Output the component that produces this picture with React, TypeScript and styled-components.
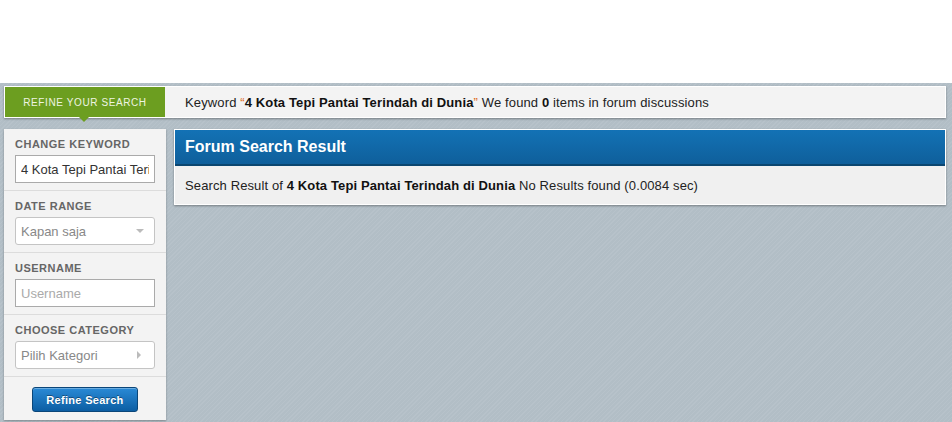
import React from 'react'
import styled, { createGlobalStyle } from 'styled-components'

const GlobalStyle = createGlobalStyle`
  html, body {
    margin: 0;
    padding: 0;
    background: #ffffff;
    font-family: 'Liberation Sans', Arial, sans-serif;
  }
`

const Page = styled.div`
  width: 952px;
  height: 422px;
  overflow: hidden;
  display: flex;
  flex-direction: column;
`

const TopSpace = styled.div`
  height: 83px;
  background: #ffffff;
`

const Stage = styled.div`
  flex: 1;
  padding: 3px 6px 0 4px;
  background-color: #b4c0c8;
  background-image: repeating-linear-gradient(
    135deg,
    rgba(255, 255, 255, 0.04) 0 1px,
    rgba(0, 0, 0, 0.01) 1px 3px
  );
  display: flex;
  flex-direction: column;
  gap: 11px;
`

const InfoBar = styled.div`
  display: flex;
  align-items: center;
  height: 30px;
  background: #f3f3f3;
  border: 1px solid #ffffff;
  box-shadow: 0 1px 2px rgba(0, 0, 0, 0.35);
`

const RefineTab = styled.div`
  position: relative;
  width: 160px;
  height: 100%;
  background: #6c9e20;
  color: #eef4e2;
  font-size: 10px;
  letter-spacing: 0.6px;
  display: flex;
  align-items: center;
  justify-content: center;
  text-transform: uppercase;

  &::after {
    content: '';
    position: absolute;
    left: 74px;
    bottom: -5px;
    border-left: 5px solid transparent;
    border-right: 5px solid transparent;
    border-top: 5px solid #6c9e20;
  }
`

const InfoText = styled.div`
  margin-left: 20px;
  font-size: 13px;
  letter-spacing: 0.13px;
  color: #222;
`

const Quote = styled.span`
  color: #e06a1b;
`

const Strong = styled.b`
  color: #111;
`

const Columns = styled.div`
  display: flex;
  align-items: flex-start;
  gap: 8px;
`

const Sidebar = styled.div`
  width: 162px;
  height: 291px;
  background: #f3f3f3;
  box-shadow: 0 1px 2px rgba(0, 0, 0, 0.3);
  display: flex;
  flex-direction: column;
`

const Section = styled.div`
  height: 62px;
  box-sizing: border-box;
  padding: 7px 11px 0;
  border-bottom: 1px solid #dcdcdc;
`

const Label = styled.div`
  font-size: 11px;
  line-height: 16px;
  font-weight: bold;
  letter-spacing: 0.5px;
  color: #666;
  margin-bottom: 3px;
`

const TextInput = styled.input`
  display: block;
  width: 140px;
  height: 28px;
  box-sizing: border-box;
  border: 1px solid #aaa;
  background: #fff;
  padding: 0 5px;
  font-family: 'Liberation Sans', Arial, sans-serif;
  font-size: 13px;
  color: #333;
  outline: none;

  &::placeholder {
    color: #aaa;
  }
`

const SelectBox = styled.div`
  display: flex;
  align-items: center;
  justify-content: space-between;
  width: 140px;
  height: 28px;
  box-sizing: border-box;
  border: 1px solid #c4c4c4;
  border-radius: 3px;
  background: #fff;
  padding: 0 10px 0 5px;
  font-size: 13px;
  color: #888;
`

const Caret = styled.span<{ $dir: 'down' | 'right' }>`
  width: 0;
  height: 0;
  ${(p) =>
    p.$dir === 'down'
      ? `border-left: 4px solid transparent;
         border-right: 4px solid transparent;
         border-top: 4px solid #bbb;`
      : `border-top: 4px solid transparent;
         border-bottom: 4px solid transparent;
         border-left: 4px solid #bbb;
         margin-right: 3px;`}
`

const ButtonRow = styled.div`
  flex: 1;
  display: flex;
  justify-content: center;
  padding-top: 10px;
`

const RefineButton = styled.button`
  width: 106px;
  height: 25px;
  border: 1px solid #0a4679;
  border-radius: 3px;
  background: linear-gradient(#2a8ad6, #0c5ea3);
  box-shadow: inset 0 1px 0 rgba(255, 255, 255, 0.3);
  color: #fff;
  font-family: 'Liberation Sans', Arial, sans-serif;
  font-size: 11px;
  letter-spacing: 0.3px;
  font-weight: bold;
  text-shadow: 0 -1px 0 rgba(0, 0, 0, 0.4);
  cursor: pointer;
`

const ResultPanel = styled.div`
  flex: 1;
  border: 1px solid #ffffff;
  box-shadow: 0 1px 2px rgba(0, 0, 0, 0.35);
  background: #f0f0f0;
`

const ResultHeader = styled.div`
  height: 34px;
  display: flex;
  align-items: center;
  padding-left: 10px;
  background: linear-gradient(#1372b5, #0f5f9b);
  border-bottom: 2px solid #0b4670;
  color: #fff;
  font-size: 16px;
  font-weight: bold;
`

const ResultBody = styled.div`
  height: 38px;
  display: flex;
  align-items: center;
  padding-left: 10px;
  font-size: 13px;
  letter-spacing: 0.12px;
  color: #222;
`

export default function App() {
  return (
    <Page>
      <GlobalStyle />
      <TopSpace />
      <Stage>
        <InfoBar>
          <RefineTab>Refine your search</RefineTab>
          <InfoText>
            Keyword <Quote>“</Quote>
            <Strong>4 Kota Tepi Pantai Terindah di Dunia</Strong>
            <Quote>”</Quote> We found <Strong>0</Strong> items in forum discussions
          </InfoText>
        </InfoBar>
        <Columns>
          <Sidebar>
            <Section>
              <Label>CHANGE KEYWORD</Label>
              <TextInput readOnly defaultValue="4 Kota Tepi Pantai Terindah di Dunia" />
            </Section>
            <Section>
              <Label>DATE RANGE</Label>
              <SelectBox>
                Kapan saja
                <Caret $dir="down" />
              </SelectBox>
            </Section>
            <Section>
              <Label>USERNAME</Label>
              <TextInput readOnly placeholder="Username" />
            </Section>
            <Section>
              <Label>CHOOSE CATEGORY</Label>
              <SelectBox>
                Pilih Kategori
                <Caret $dir="right" />
              </SelectBox>
            </Section>
            <ButtonRow>
              <RefineButton>Refine Search</RefineButton>
            </ButtonRow>
          </Sidebar>
          <ResultPanel>
            <ResultHeader>Forum Search Result</ResultHeader>
            <ResultBody>
              Search Result of&nbsp;<Strong>4 Kota Tepi Pantai Terindah di Dunia</Strong>&nbsp;No
              Results found (0.0084 sec)
            </ResultBody>
          </ResultPanel>
        </Columns>
      </Stage>
    </Page>
  )
}
